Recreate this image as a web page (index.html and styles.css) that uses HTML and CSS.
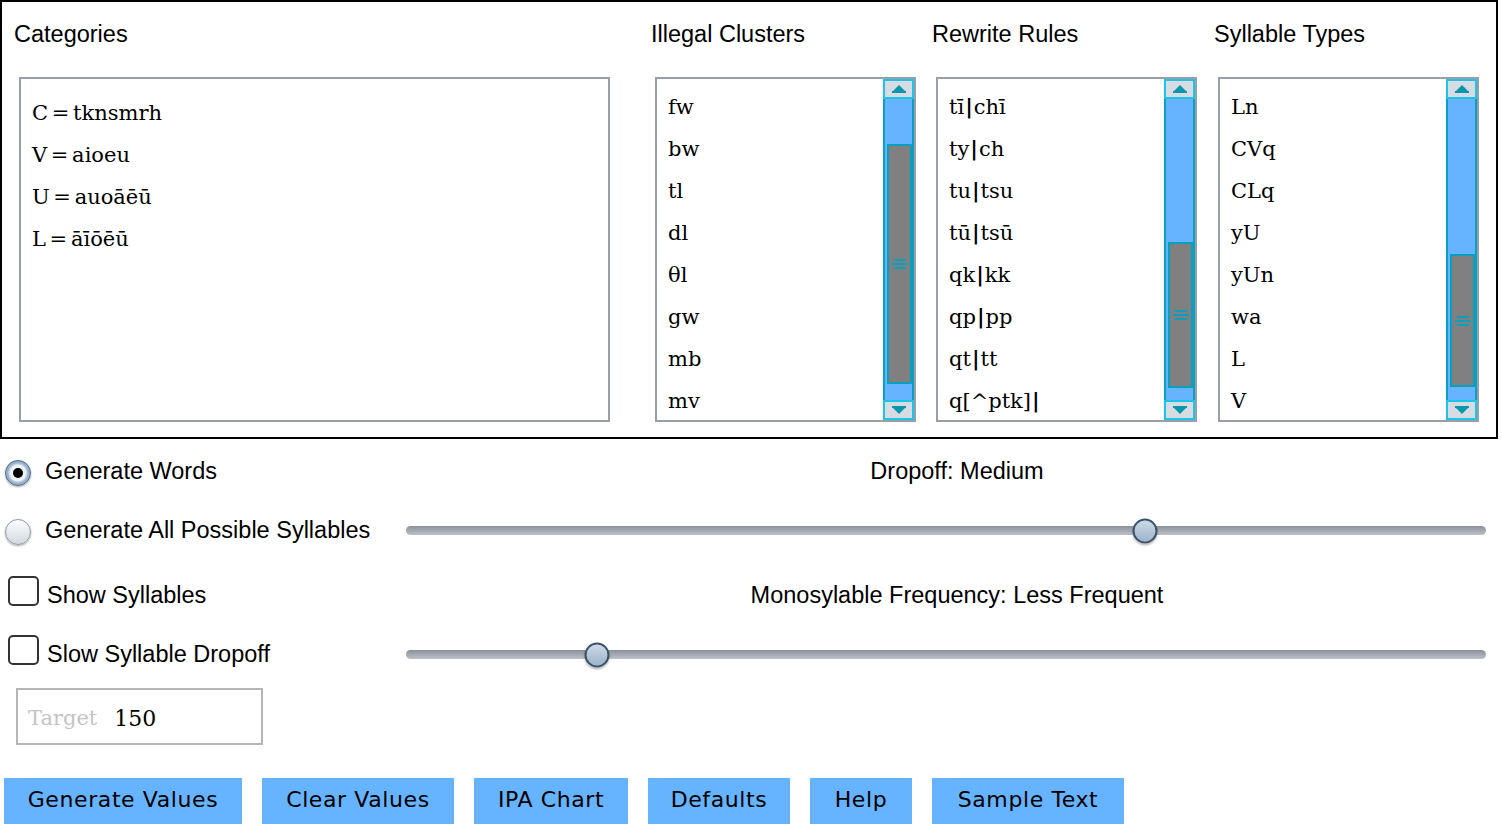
FILE: index.html
```html
<!DOCTYPE html>
<html lang="en">
<head>
  <meta charset="UTF-8">
  <title>Word Generator</title>
  <link rel="stylesheet" href="styles.css">
</head>
<body>
  <div class="panel">
    <div class="col">
      <div class="col-title">Categories</div>
      <div class="box box-wide">
        <div class="entry">C = tknsmrh</div>
        <div class="entry">V = aioeu</div>
        <div class="entry">U = auoāēū</div>
        <div class="entry">L = āīōēū</div>
      </div>
    </div>

    <div class="col">
      <div class="col-title">Illegal Clusters</div>
      <div class="box">
        <div class="list-items">
          <div class="entry">fw</div>
          <div class="entry">bw</div>
          <div class="entry">tl</div>
          <div class="entry">dl</div>
          <div class="entry">θl</div>
          <div class="entry">gw</div>
          <div class="entry">mb</div>
          <div class="entry">mv</div>
        </div>
        <div class="scrollbar">
          <div class="sb-btn"><svg width="14" height="8" viewBox="0 0 14 8"><polygon points="7,0 13,6 1,6" fill="#0a97aa"/><rect x="0" y="6" width="14" height="2" fill="#0a97aa"/></svg></div>
          <div class="sb-track"><div class="sb-thumb" style="top:45px;height:240px"><span class="grip"></span></div></div>
          <div class="sb-btn"><svg width="14" height="8" viewBox="0 0 14 8"><rect x="0" y="0" width="14" height="2" fill="#0a97aa"/><polygon points="1,2 13,2 7,8" fill="#0a97aa"/></svg></div>
        </div>
      </div>
    </div>

    <div class="col">
      <div class="col-title">Rewrite Rules</div>
      <div class="box">
        <div class="list-items">
          <div class="entry">tī<b class="bar">|</b>chī</div>
          <div class="entry">ty<b class="bar">|</b>ch</div>
          <div class="entry">tu<b class="bar">|</b>tsu</div>
          <div class="entry">tū<b class="bar">|</b>tsū</div>
          <div class="entry">qk<b class="bar">|</b>kk</div>
          <div class="entry">qp<b class="bar">|</b>pp</div>
          <div class="entry">qt<b class="bar">|</b>tt</div>
          <div class="entry">q[^ptk]<b class="bar">|</b></div>
        </div>
        <div class="scrollbar">
          <div class="sb-btn"><svg width="14" height="8" viewBox="0 0 14 8"><polygon points="7,0 13,6 1,6" fill="#0a97aa"/><rect x="0" y="6" width="14" height="2" fill="#0a97aa"/></svg></div>
          <div class="sb-track"><div class="sb-thumb" style="top:143px;height:146px"><span class="grip"></span></div></div>
          <div class="sb-btn"><svg width="14" height="8" viewBox="0 0 14 8"><rect x="0" y="0" width="14" height="2" fill="#0a97aa"/><polygon points="1,2 13,2 7,8" fill="#0a97aa"/></svg></div>
        </div>
      </div>
    </div>

    <div class="col">
      <div class="col-title">Syllable Types</div>
      <div class="box">
        <div class="list-items">
          <div class="entry">Ln</div>
          <div class="entry">CVq</div>
          <div class="entry">CLq</div>
          <div class="entry">yU</div>
          <div class="entry">yUn</div>
          <div class="entry">wa</div>
          <div class="entry">L</div>
          <div class="entry">V</div>
        </div>
        <div class="scrollbar">
          <div class="sb-btn"><svg width="14" height="8" viewBox="0 0 14 8"><polygon points="7,0 13,6 1,6" fill="#0a97aa"/><rect x="0" y="6" width="14" height="2" fill="#0a97aa"/></svg></div>
          <div class="sb-track"><div class="sb-thumb" style="top:155px;height:133px"><span class="grip"></span></div></div>
          <div class="sb-btn"><svg width="14" height="8" viewBox="0 0 14 8"><rect x="0" y="0" width="14" height="2" fill="#0a97aa"/><polygon points="1,2 13,2 7,8" fill="#0a97aa"/></svg></div>
        </div>
      </div>
    </div>
  </div>

  <div class="controls">
    <div class="option-group">
      <div class="option">
        <span class="radio radio-on"><span class="dot"></span></span>
        <span class="radio-label">Generate Words</span>
      </div>
      <div class="setting-label">Dropoff: Medium</div>
      <div class="option">
        <span class="radio"></span>
        <span class="radio-label">Generate All Possible Syllables</span>
      </div>
      <div class="slider">
        <div class="slider-track"></div>
        <div class="knob" style="left:68.4%"></div>
      </div>
    </div>

    <div class="option-group">
      <div class="option">
        <span class="checkbox"></span>
        <span class="check-label">Show Syllables</span>
      </div>
      <div class="setting-label">Monosylable Frequency: Less Frequent</div>
      <div class="option">
        <span class="checkbox"></span>
        <span class="check-label">Slow Syllable Dropoff</span>
      </div>
      <div class="slider">
        <div class="slider-track"></div>
        <div class="knob" style="left:17.7%"></div>
      </div>
    </div>

    <div class="target-field">
      <span class="target-hint">Target</span>
      <span class="target-value">150</span>
    </div>

    <div class="button-row">
      <a class="btn btn-generate">Generate Values</a>
      <a class="btn btn-clear">Clear Values</a>
      <a class="btn btn-ipa">IPA Chart</a>
      <a class="btn btn-defaults">Defaults</a>
      <a class="btn btn-help">Help</a>
      <a class="btn btn-sample">Sample Text</a>
    </div>
  </div>
</body>
</html>
```

FILE: styles.css
```css
* {
  box-sizing: border-box;
}

body {
  margin: 0;
  background: #fff;
  color: #000;
  font-family: "Liberation Sans", Arial, sans-serif;
  font-size: 23.5px;
}

.panel {
  width: 1498px;
  height: 439px;
  border: 2px solid #000;
  padding: 19px 0 0 12px;
  display: grid;
  grid-template-columns: 637px 281px 282px 1fr;
}

.col-title {
  height: 26px;
  line-height: 26px;
  margin-bottom: 30px;
}

.box {
  display: flex;
  width: 261px;
  height: 345px;
  margin-left: 4px;
  border: 2px solid #9a9ea8;
  background: #fff;
}

.box-wide {
  display: block;
  width: 591px;
  margin-left: 5px;
  padding: 13px 0 0 11px;
}

.entry {
  font-family: "DejaVu Serif", "Liberation Serif", serif;
  font-size: 21px;
  line-height: 42px;
  white-space: pre;
  word-spacing: -3px;
}

.bar {
  font-weight: bold;
  margin: 0 1px;
}

.list-items {
  flex: 1;
  padding: 7px 0 0 11px;
  overflow: hidden;
}

/* scrollbar */
.scrollbar {
  width: 31px;
  display: flex;
  flex-direction: column;
}

.sb-btn {
  height: 20px;
  background: #d7dce4;
  border: 2px solid #1cc4e6;
  display: flex;
  align-items: center;
  justify-content: center;
}

.sb-track {
  flex: 1;
  position: relative;
  background: #66b3ff;
  border-left: 2px solid #0aa0c4;
  border-right: 2px solid #0aa0c4;
}

.sb-thumb {
  position: absolute;
  left: 2px;
  right: 0;
  background: #808080;
  border: 2px solid #0a9fbd;
  display: flex;
  align-items: center;
  justify-content: center;
}

.grip {
  width: 16px;
  height: 2px;
  background: #0a9fbd;
  position: relative;
}

.grip::before,
.grip::after {
  content: "";
  position: absolute;
  left: 2px;
  width: 12px;
  height: 2px;
  background: #0a9fbd;
}

.grip::before {
  top: -4px;
}

.grip::after {
  top: 4px;
}

/* options */
.controls {
  padding-top: 3px;
}

.option-group {
  display: grid;
  grid-template-columns: 406px 1fr;
  grid-auto-rows: 59px;
}

.option-group + .option-group {
  margin-top: 6px;
}

.option {
  display: flex;
  align-items: center;
}

.setting-label {
  display: flex;
  align-items: center;
  justify-content: center;
  padding-left: 6px;
}

.radio {
  width: 26px;
  height: 26px;
  margin: 2px 0 0 5px;
  border-radius: 50%;
  border: 1px solid #8d99a6;
  background: linear-gradient(#fdfdfd, #d3d8df);
  box-shadow: 0 1px 2px rgba(0, 0, 0, 0.35);
  display: flex;
  align-items: center;
  justify-content: center;
}

.radio-on {
  border: 1px solid #4f6b86;
  background: radial-gradient(circle, #eef3f8 45%, #9cb4cc 60%, #7d99b6 100%);
}

.dot {
  width: 10px;
  height: 10px;
  border-radius: 50%;
  background: #000;
}

.radio-label {
  margin-left: 14px;
}

.checkbox {
  width: 31px;
  height: 30px;
  margin: 0 0 10px 8px;
  border: 2px solid #333;
  border-radius: 5px;
  background: #fff;
}

.check-label {
  margin-left: 8px;
}

/* sliders */
.slider {
  position: relative;
  display: flex;
  align-items: center;
  margin-right: 16px;
}

.slider-track {
  flex: 1;
  height: 9px;
  border-radius: 5px;
  background: linear-gradient(#8b909a, #bcc0c8);
}

.knob {
  position: absolute;
  top: 50%;
  width: 25px;
  height: 25px;
  border-radius: 50%;
  border: 2px solid #3c5168;
  background: linear-gradient(#cbd9e6, #9db4ca);
  box-shadow: 0 2px 2px rgba(0, 0, 0, 0.25);
  transform: translate(-50%, -50%);
}

/* target */
.target-field {
  display: flex;
  align-items: center;
  width: 247px;
  height: 57px;
  margin: 4px 0 0 16px;
  padding: 3px 0 0 10px;
  border: 2px solid #b6b6b6;
  font-family: "DejaVu Serif", "Liberation Serif", serif;
  font-size: 21px;
}

.target-hint {
  color: #c4c4c4;
}

.target-value {
  margin-left: 17px;
  font-size: 22px;
}

/* buttons */
.button-row {
  display: flex;
  gap: 20px;
  margin: 33px 0 0 4px;
}

.btn {
  height: 46px;
  padding-bottom: 4px;
  display: flex;
  align-items: center;
  justify-content: center;
  background: #66b3ff;
  color: #000;
  font-family: "DejaVu Sans", sans-serif;
  font-size: 22px;
  letter-spacing: 0.6px;
  cursor: pointer;
}

.btn-generate { width: 238px; }
.btn-clear { width: 192px; }
.btn-ipa { width: 154px; }
.btn-defaults { width: 142px; }
.btn-help { width: 102px; }
.btn-sample { width: 192px; }
```
